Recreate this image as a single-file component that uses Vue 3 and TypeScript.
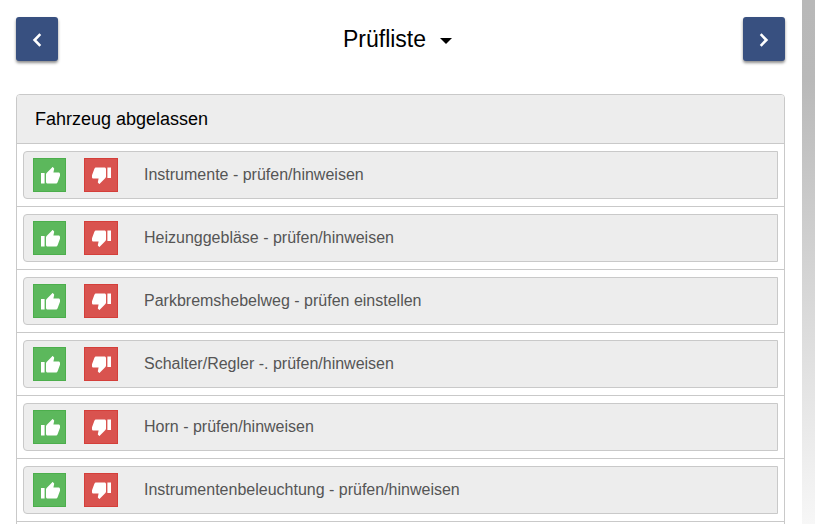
<script setup lang="ts">
import { ref } from 'vue'

interface CheckItem {
  id: number
  label: string
}

const title = ref<string>('Prüfliste')
const section = ref<string>('Fahrzeug abgelassen')
const items = ref<CheckItem[]>([
  { id: 1, label: 'Instrumente - prüfen/hinweisen' },
  { id: 2, label: 'Heizunggebläse - prüfen/hinweisen' },
  { id: 3, label: 'Parkbremshebelweg - prüfen einstellen' },
  { id: 4, label: 'Schalter/Regler -. prüfen/hinweisen' },
  { id: 5, label: 'Horn - prüfen/hinweisen' },
  { id: 6, label: 'Instrumentenbeleuchtung - prüfen/hinweisen' },
])
</script>

<template>
  <div class="page">
    <main class="content">
      <header class="topbar">
        <button class="nav" type="button" aria-label="Zurück">
          <svg class="chevron" viewBox="0 0 10 14" width="10" height="14"><path d="M8.3 1.2 2.6 7l5.7 5.8" /></svg>
        </button>
        <button class="title" type="button">
          <span>{{ title }}</span>
          <svg class="caret" viewBox="0 0 12 6" width="12" height="6"><path d="M0 0h12L6 6z" /></svg>
        </button>
        <button class="nav" type="button" aria-label="Weiter">
          <svg class="chevron" viewBox="0 0 10 14" width="10" height="14"><path d="M1.7 1.2 7.4 7l-5.7 5.8" /></svg>
        </button>
      </header>

      <section class="group">
        <h2 class="heading">{{ section }}</h2>
        <ul class="list">
          <li v-for="item in items" :key="item.id" class="row">
            <div class="item">
              <button class="vote up" type="button" :aria-label="item.label + ': in Ordnung'">
                <svg viewBox="0 0 19 17" width="19" height="17"><path d="M0 6h3.6v10.5H0zM5 7.5c0-.6.2-1 .6-1.4L11.3.3c.3-.3.6-.2.9.1l.8.8c.2.3.2.6.1 1L12.4 5.4h5c1 0 1.6.7 1.6 1.6v1.8l-2.4 6.4c-.4.9-.9 1.3-1.8 1.3H6.6c-1 0-1.6-.6-1.6-1.5z" /></svg>
              </button>
              <button class="vote down" type="button" :aria-label="item.label + ': nicht in Ordnung'">
                <svg viewBox="0 0 19 17" width="19" height="17"><path transform="rotate(180 9.5 8.5)" d="M0 6h3.6v10.5H0zM5 7.5c0-.6.2-1 .6-1.4L11.3.3c.3-.3.6-.2.9.1l.8.8c.2.3.2.6.1 1L12.4 5.4h5c1 0 1.6.7 1.6 1.6v1.8l-2.4 6.4c-.4.9-.9 1.3-1.8 1.3H6.6c-1 0-1.6-.6-1.6-1.5z" /></svg>
              </button>
              <span class="label">{{ item.label }}</span>
            </div>
          </li>
        </ul>
      </section>
    </main>
    <div class="edge"></div>
  </div>
</template>

<style>
body {
  background: #fff;
  overflow: hidden;
}
</style>

<style scoped>
.page {
  display: flex;
  min-height: 100vh;
  font-family: "Liberation Sans", Arial, sans-serif;
  color: #000;
}

.content {
  flex: 1;
  min-width: 0;
  padding: 17px 17px 0 16px;
}

.edge {
  width: 13px;
  background: linear-gradient(#b8b8b8 0, #b9b9b9 80px, #f7f7f7 524px);
}

button {
  margin: 0;
  padding: 0;
  font: inherit;
  color: inherit;
  cursor: pointer;
}

svg {
  display: block;
  fill: currentColor;
}

.topbar {
  display: flex;
  align-items: center;
  justify-content: space-between;
  margin-bottom: 33px;
}

.nav {
  display: flex;
  align-items: center;
  justify-content: center;
  width: 42px;
  height: 44px;
  padding-top: 2px;
  border: 0;
  border-radius: 3px;
  background: #385080;
  color: #fff;
  box-shadow: 0 2px 3px rgba(0, 0, 0, 0.45);
}

.chevron {
  fill: none;
  stroke: currentColor;
  stroke-width: 2.6;
}

.title {
  display: flex;
  align-items: center;
  gap: 14px;
  padding-right: 6px;
  border: 0;
  background: none;
  font-size: 23px;
  line-height: 28px;
}

.caret {
  margin-top: 4px;
}

.group {
  border: 1px solid #c9c9c9;
  border-radius: 4px 4px 0 0;
  padding-bottom: 16px;
}

.heading {
  margin: 0;
  padding: 12px 18px;
  border-radius: 3px 3px 0 0;
  background: #ededed;
  font-size: 18px;
  font-weight: 400;
  line-height: 24px;
  border-bottom: 1px solid #c9c9c9;
}

.list {
  margin: 0;
  padding: 0;
  list-style: none;
}

.row {
  padding: 7px 6px;
  border-bottom: 1px solid #c9c9c9;
}

.item {
  display: flex;
  align-items: center;
  padding: 6px 9px;
  border: 1px solid #c9c9c9;
  border-radius: 4px 0 0 4px;
  background: #ededed;
}

.vote {
  display: flex;
  align-items: center;
  justify-content: center;
  width: 34px;
  height: 34px;
  color: #fff;
}

.up {
  width: 33px;
  margin-right: 18px;
  padding-left: 2px;
  border: 1px solid #4cae4c;
  background: #5cb85c;
}

.down {
  margin-right: 26px;
  padding-top: 1px;
  border: 1px solid #d43f3a;
  background: #d9534f;
}

.label {
  color: #555;
  font-size: 16px;
  line-height: 22px;
}
</style>
